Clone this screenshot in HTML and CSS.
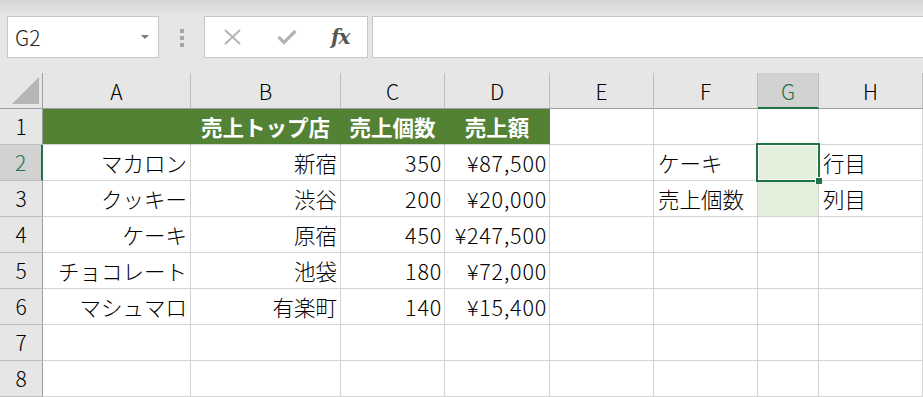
FILE: index.html
```html
<!DOCTYPE html>
<html lang="ja">

<head>
  <meta charset="UTF-8">
  <title>Excel - INDEX MATCH</title>
  <link rel="stylesheet" href="styles.css">
</head>

<body>
  <div class="formula-bar">
    <div class="name-box">
      <span>G2</span>
      <span class="caret"></span>
    </div>
    <div class="grip"><i></i><i></i><i></i></div>
    <div class="fx-buttons">
      <svg class="btn-icon" width="19" height="16" viewBox="0 0 19 16">
        <path d="M2 1 L17 15 M17 1 L2 15" stroke="#b4b4b4" stroke-width="2" fill="none" />
      </svg>
      <svg class="btn-icon" width="20" height="16" viewBox="0 0 20 16">
        <path d="M1.5 8 L7 13.5 L18.5 2" stroke="#b4b4b4" stroke-width="3.2" fill="none" />
      </svg>
      <span class="fx">fx</span>
    </div>
    <div class="formula-input"></div>
  </div>

  <div class="sheet">
    <div class="corner"><span class="corner-tri"></span></div>
    <div class="col-head">A</div>
    <div class="col-head">B</div>
    <div class="col-head">C</div>
    <div class="col-head">D</div>
    <div class="col-head">E</div>
    <div class="col-head">F</div>
    <div class="col-head active">G</div>
    <div class="col-head">H</div>

    <!-- 1 -->
    <div class="row-head">1</div>
    <div class="cell title"></div>
    <div class="cell title">売上トップ店</div>
    <div class="cell title">売上個数</div>
    <div class="cell title">売上額</div>
    <div class="cell"></div>
    <div class="cell"></div>
    <div class="cell"></div>
    <div class="cell"></div>

    <!-- 2 -->
    <div class="row-head active">2</div>
    <div class="cell right">マカロン</div>
    <div class="cell right">新宿</div>
    <div class="cell right num">350</div>
    <div class="cell right num">¥87,500</div>
    <div class="cell"></div>
    <div class="cell">ケーキ</div>
    <div class="cell selected"></div>
    <div class="cell">行目</div>

    <!-- 3 -->
    <div class="row-head">3</div>
    <div class="cell right">クッキー</div>
    <div class="cell right">渋谷</div>
    <div class="cell right num">200</div>
    <div class="cell right num">¥20,000</div>
    <div class="cell"></div>
    <div class="cell">売上個数</div>
    <div class="cell filled"></div>
    <div class="cell">列目</div>

    <!-- 4 -->
    <div class="row-head">4</div>
    <div class="cell right">ケーキ</div>
    <div class="cell right">原宿</div>
    <div class="cell right num">450</div>
    <div class="cell right num">¥247,500</div>
    <div class="cell"></div>
    <div class="cell"></div>
    <div class="cell"></div>
    <div class="cell"></div>

    <!-- 5 -->
    <div class="row-head">5</div>
    <div class="cell right">チョコレート</div>
    <div class="cell right">池袋</div>
    <div class="cell right num">180</div>
    <div class="cell right num">¥72,000</div>
    <div class="cell"></div>
    <div class="cell"></div>
    <div class="cell"></div>
    <div class="cell"></div>

    <!-- 6 -->
    <div class="row-head">6</div>
    <div class="cell right">マシュマロ</div>
    <div class="cell right">有楽町</div>
    <div class="cell right num">140</div>
    <div class="cell right num">¥15,400</div>
    <div class="cell"></div>
    <div class="cell"></div>
    <div class="cell"></div>
    <div class="cell"></div>

    <!-- 7 -->
    <div class="row-head">7</div>
    <div class="cell"></div>
    <div class="cell"></div>
    <div class="cell"></div>
    <div class="cell"></div>
    <div class="cell"></div>
    <div class="cell"></div>
    <div class="cell"></div>
    <div class="cell"></div>

    <!-- 8 -->
    <div class="row-head">8</div>
    <div class="cell"></div>
    <div class="cell"></div>
    <div class="cell"></div>
    <div class="cell"></div>
    <div class="cell"></div>
    <div class="cell"></div>
    <div class="cell"></div>
    <div class="cell"></div>
  </div>
</body>

</html>
```

FILE: styles.css
```css
body {
  margin: 0;
  background: #e6e6e6;
  font-family: "Noto Sans CJK JP", "Noto Sans", sans-serif;
  overflow: hidden;
}

.formula-bar {
  display: flex;
  align-items: flex-start;
  height: 73px;
  padding-top: 16px;
  box-sizing: border-box;
  background: linear-gradient(#d6d6d6, #e6e6e6 16px);
}

.name-box {
  display: flex;
  align-items: center;
  justify-content: space-between;
  width: 152px;
  height: 42px;
  margin-left: 7px;
  padding: 0 9px 0 7px;
  box-sizing: border-box;
  background: #fff;
  border: 1px solid #c6c6c6;
  font-size: 21px;
  font-weight: 300;
  color: #222;
}

.caret {
  width: 0;
  height: 0;
  border-left: 4px solid transparent;
  border-right: 4px solid transparent;
  border-top: 4px solid #7a7a7a;
}

.grip {
  width: 45px;
  display: flex;
  flex-direction: column;
  align-items: center;
  gap: 3px;
  padding-top: 13px;
}

.grip i {
  display: block;
  width: 4px;
  height: 4px;
  background: #a6a6a6;
}

.fx-buttons {
  display: flex;
  align-items: center;
  width: 164px;
  height: 42px;
  padding-left: 18px;
  box-sizing: border-box;
  background: #fff;
  border: 1px solid #c6c6c6;
  gap: 35px;
}

.btn-icon {
  display: block;
}

.fx {
  font-family: "DejaVu Serif", "Liberation Serif", serif;
  font-style: italic;
  font-weight: bold;
  font-size: 20px;
  color: #555;
  letter-spacing: -1px;
  margin-left: -1px;
}

.formula-input {
  flex: 1;
  height: 42px;
  margin-left: 4px;
  margin-right: -4px;
  box-sizing: border-box;
  background: #fff;
  border: 1px solid #c6c6c6;
}

.sheet {
  display: grid;
  grid-template-columns: 43px 148px 150px 104px 105px 104px 104px 61px 104px;
  grid-auto-rows: 36px;
  background: #fff;
}

.corner,
.col-head,
.row-head,
.cell {
  box-sizing: border-box;
  display: flex;
  align-items: center;
  font-size: 21.5px;
  font-weight: 300;
  line-height: 1;
  color: #000;
  white-space: nowrap;
}

.corner {
  position: relative;
  background: #e6e6e6;
  border-right: 1px solid #9e9e9e;
  border-bottom: 1px solid #9e9e9e;
}

.corner-tri {
  position: absolute;
  left: 12px;
  bottom: 4px;
  width: 0;
  height: 0;
  border-left: 27px solid transparent;
  border-bottom: 27px solid #b5b5b5;
}

.col-head {
  justify-content: center;
  background: #e6e6e6;
  border-right: 1px solid #bdbdbd;
  border-bottom: 1px solid #9e9e9e;
  padding-top: 2px;
  font-size: 21px;
}

.col-head.active {
  background: #d2d2d2;
  color: #217346;
  border-bottom: 2px solid #217346;
}

.row-head {
  justify-content: center;
  background: #e6e6e6;
  border-right: 1px solid #9e9e9e;
  border-bottom: 1px solid #bdbdbd;
  font-size: 21px;
}

.row-head.active {
  background: #d2d2d2;
  color: #217346;
  border-right: 2px solid #217346;
}

.cell {
  padding: 0 4px;
  border-right: 1px solid #d4d4d4;
  border-bottom: 1px solid #d4d4d4;
}

.cell.right {
  justify-content: flex-end;
  padding-right: 3px;
}

.cell.num {
  letter-spacing: 0.8px;
  padding-right: 2px;
}

.cell.title {
  justify-content: center;
  background: #548235;
  border-right-color: #548235;
  color: #fff;
  font-weight: bold;
}

.cell.filled {
  background: #e2efda;
}

.cell.selected {
  position: relative;
  background: #e2efda;
}

/* selection frame and fill handle */
.cell.selected::before {
  content: "";
  position: absolute;
  left: -2px;
  top: -2px;
  right: -2px;
  bottom: -2px;
  border: 2px solid #217346;
  box-shadow: inset 0 0 0 1px #fff;
}

.cell.selected::after {
  content: "";
  position: absolute;
  right: -4px;
  bottom: -4px;
  width: 6px;
  height: 6px;
  background: #217346;
  border-left: 1px solid #fff;
  border-top: 1px solid #fff;
}
```
